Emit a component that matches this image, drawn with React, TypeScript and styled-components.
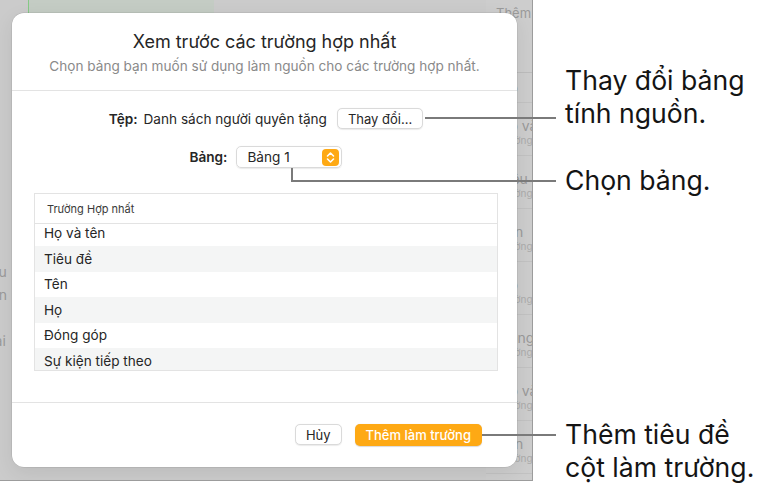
import styled, { createGlobalStyle } from "styled-components";

const GlobalStyle = createGlobalStyle`
  html, body {
    margin: 0;
    padding: 0;
    background: #ffffff;
  }
  body {
    font-family: Inter, "Noto Sans", "Liberation Sans", sans-serif;
    -webkit-font-smoothing: antialiased;
  }
`;

const Page = styled.div`
  position: relative;
  width: 769px;
  height: 497px;
  overflow: hidden;
  background: #ffffff;
`;

const Screen = styled.div`
  position: relative;
  box-sizing: border-box;
  width: 533px;
  height: 481px;
  padding: 13px 0 0 12px;
  background: #cbcbcb;
  border-right: 1px solid #9c9c9c;
  border-bottom: 1px solid #9c9c9c;
  overflow: hidden;
`;

/* the app behind the sheet */
const GreenPanel = styled.div`
  position: absolute;
  left: 28px;
  top: 0;
  width: 185px;
  height: 60px;
  background: #c4ccc4;
  border-left: 1px solid #86c986;
`;

const Sidebar = styled.div`
  position: absolute;
  left: 486px;
  top: 0;
  width: 46px;
  height: 100%;
  background: #cdcdcd;
`;

const SideHead = styled.div`
  height: 73px;
  padding: 3px 0 0 10px;
  box-sizing: border-box;
  border-bottom: 1px solid #bcbcbc;
  font-size: 13px;
  line-height: 20px;
  color: #9a9a9a;
  white-space: nowrap;
`;

const SideItem = styled.div<{ $tall?: boolean }>`
  height: ${(p) => (p.$tall ? 30 : 53)}px;
  padding: ${(p) => (p.$tall ? "6px" : "14px")} 0 0 13px;
  box-sizing: border-box;
  border-bottom: 1px solid #c2c2c2;
  white-space: nowrap;
  color: #9a9a9a;
`;

const SideName = styled.div`
  font-size: 14px;
  line-height: 17px;
`;

const SideSub = styled.div`
  font-size: 10px;
  line-height: 13px;
  color: #ababab;
`;

const LeftBits = styled.div`
  position: absolute;
  left: -14px;
  top: 260px;
  display: flex;
  flex-direction: column;
  font-size: 14px;
  line-height: 23px;
  color: #9a9a9a;
`;

const Dialog = styled.div`
  position: relative;
  z-index: 1;
  display: flex;
  flex-direction: column;
  width: 505px;
  height: 454px;
  background: #ffffff;
  border-radius: 12px;
  box-shadow: 0 0 0 0.5px rgba(0, 0, 0, 0.12), 0 6px 20px rgba(0, 0, 0, 0.08);
  color: #222;
  overflow: hidden;
`;

const Header = styled.div`
  display: flex;
  flex-direction: column;
  align-items: center;
  gap: 5px;
  height: 78px;
  box-sizing: border-box;
  padding-top: 18px;
  border-bottom: 1px solid #e3e3e3;
`;

const Title = styled.div`
  font-size: 18px;
  line-height: 22px;
  color: #262626;
`;

const Subtitle = styled.div`
  font-size: 13.6px;
  line-height: 16px;
  color: #8a8a8a;
`;

const Body = styled.div`
  display: flex;
  flex-direction: column;
  align-items: center;
  height: 312px;
  box-sizing: border-box;
  padding: 17px 19px 0 22px;
  border-bottom: 1px solid #e3e3e3;
`;

const FieldRow = styled.div<{ $gap: number; $after: number }>`
  display: flex;
  align-items: center;
  justify-content: center;
  gap: ${(p) => p.$gap}px;
  font-size: 13.6px;
  line-height: 16px;
  color: #262626;
  margin-bottom: ${(p) => p.$after}px;
`;

const Label = styled.span`
  font-weight: 600;
`;

const Value = styled.span`
  margin-right: 4px;
`;

const PushButton = styled.button<{ $primary?: boolean }>`
  height: ${(p) => (p.$primary ? 22 : 21)}px;
  padding: 0 ${(p) => (p.$primary ? 11 : 10)}px;
  border-radius: 5px;
  border: ${(p) => (p.$primary ? "none" : "1px solid #dadada")};
  background: ${(p) => (p.$primary ? "#fea914" : "#ffffff")};
  box-shadow: ${(p) => (p.$primary ? "0 0.5px 1px rgba(0,0,0,0.15)" : "0 0.5px 1px rgba(0,0,0,0.08)")};
  font-family: inherit;
  font-size: 13px;
  font-weight: ${(p) => (p.$primary ? 500 : 400)};
  color: ${(p) => (p.$primary ? "#ffffff" : "#262626")};
`;

const Popup = styled.div`
  display: flex;
  align-items: center;
  justify-content: space-between;
  box-sizing: border-box;
  width: 106px;
  height: 22px;
  padding: 0 2px 0 10px;
  border-radius: 5px;
  border: 1px solid #dadada;
  box-shadow: 0 0.5px 1px rgba(0, 0, 0, 0.08);
  font-size: 13.6px;
  color: #262626;
`;

const Table = styled.div`
  display: flex;
  flex-direction: column;
  align-self: stretch;
  height: 176px;
  border: 1px solid #e3e3e3;
  overflow: hidden;
`;

const TableHead = styled.div`
  flex: none;
  height: 29px;
  display: flex;
  align-items: center;
  padding-left: 12px;
  border-bottom: 1px solid #e3e3e3;
  font-size: 11px;
  color: #3a3a3a;
`;

const TableBody = styled.div`
  flex: 1;
  overflow: hidden;
`;

const Rows = styled.div`
  margin-top: -3.5px;
`;

const Row = styled.div<{ $alt: boolean }>`
  height: 25.5px;
  display: flex;
  align-items: center;
  padding-left: 9px;
  background: ${(p) => (p.$alt ? "#f4f5f5" : "#ffffff")};
  font-size: 13.6px;
  color: #262626;
`;

const Footer = styled.div`
  display: flex;
  justify-content: flex-end;
  align-items: flex-start;
  gap: 13px;
  padding: 21px 35px 0 0;
`;

/* annotations drawn over the screenshot */
const Line = styled.div<{ $left: number; $top: number; $w: number; $h: number }>`
  position: absolute;
  z-index: 2;
  left: ${(p) => p.$left}px;
  top: ${(p) => p.$top}px;
  width: ${(p) => p.$w}px;
  height: ${(p) => p.$h}px;
  background: #7a7a7a;
`;

const Note = styled.div<{ $top: number }>`
  position: absolute;
  left: 565px;
  top: ${(p) => p.$top}px;
  font-size: 26.6px;
  line-height: 33px;
  color: #141414;
  white-space: nowrap;
`;

const Stepper = () => (
  <svg width="17" height="17" viewBox="0 0 17 17">
    <rect x="0" y="0" width="17" height="17" rx="4" fill="#fea914" />
    <path d="M5.5 7 L8.5 4 L11.5 7" stroke="#fff" strokeWidth="1.6" fill="none" strokeLinecap="round" strokeLinejoin="round" />
    <path d="M5.5 10 L8.5 13 L11.5 10" stroke="#fff" strokeWidth="1.6" fill="none" strokeLinecap="round" strokeLinejoin="round" />
  </svg>
);

const fields = ["Họ và tên", "Tiêu đề", "Tên", "Họ", "Đóng góp", "Sự kiện tiếp theo", "Ghi chú"];
const sideFields = ["Họ và tên", "Tiêu đề", "Tên", "Họ", "Đóng góp", "Họ và tên", "Tên"];

export default function App() {
  return (
    <>
      <GlobalStyle />
      <Page>
        <Screen>
          <GreenPanel />
          <Sidebar>
            <SideHead>
              Thêm
              <br />
              g
            </SideHead>
            <SideItem $tall>
              <SideName>Họ</SideName>
            </SideItem>
            {sideFields.map((f, i) => (
              <SideItem key={i}>
                <SideName>{f}</SideName>
                <SideSub>Trường hợp nhất</SideSub>
              </SideItem>
            ))}
          </Sidebar>
          <LeftBits>
            <span>&nbsp;qu</span>
            <span>tôn</span>
            <span>&nbsp;</span>
            <span>đại</span>
          </LeftBits>

          <Dialog>
            <Header>
              <Title>Xem trước các trường hợp nhất</Title>
              <Subtitle>Chọn bảng bạn muốn sử dụng làm nguồn cho các trường hợp nhất.</Subtitle>
            </Header>
            <Body>
              <FieldRow $gap={6} $after={17}>
                <Label>Tệp:</Label>
                <Value>Danh sách người quyên tặng</Value>
                <PushButton>Thay đổi...</PushButton>
              </FieldRow>
              <FieldRow $gap={9} $after={25}>
                <Label>Bảng:</Label>
                <Popup>
                  <span>Bảng 1</span>
                  <Stepper />
                </Popup>
              </FieldRow>
              <Table>
                <TableHead>Trường Hợp nhất</TableHead>
                <TableBody>
                  <Rows>
                    {fields.map((f, i) => (
                      <Row key={f} $alt={i % 2 === 1}>
                        {f}
                      </Row>
                    ))}
                  </Rows>
                </TableBody>
              </Table>
            </Body>
            <Footer>
              <PushButton>Hủy</PushButton>
              <PushButton $primary>Thêm làm trường</PushButton>
            </Footer>
          </Dialog>
        </Screen>

        <Line $left={425} $top={117} $w={131} $h={2} />
        <Note $top={64}>
          Thay đổi bảng
          <br />
          tính nguồn.
        </Note>

        <Line $left={291} $top={168} $w={2} $h={14} />
        <Line $left={291} $top={180} $w={265} $h={2} />
        <Note $top={164}>Chọn bảng.</Note>

        <Line $left={482} $top={434} $w={74} $h={2} />
        <Note $top={418}>
          Thêm tiêu đề
          <br />
          cột làm trường.
        </Note>
      </Page>
    </>
  );
}
